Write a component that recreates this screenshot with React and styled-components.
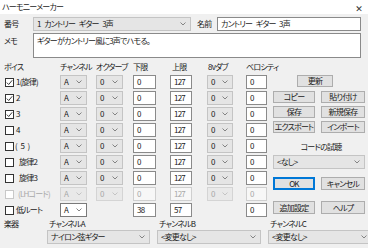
import React from 'react'
import styled, { createGlobalStyle, css } from 'styled-components'

const GlobalStyle = createGlobalStyle`
    html, body {
        margin: 0;
        padding: 0;
        background: #f0f0f0;
        overflow: hidden;
    }
    body {
        font-family: "Noto Sans CJK JP", "Noto Sans", sans-serif;
        font-size: 8px;
        font-feature-settings: "palt" 1;
        letter-spacing: -0.8px;
        word-spacing: 2.5px;
        color: #1a1a1a;
    }
`

const Window = styled.div`
    width: 368px;
    height: 248px;
    background: #f0f0f0;
    display: flex;
    flex-direction: column;
`

const TitleBar = styled.div`
    height: 14px;
    background: #fff;
    display: flex;
    align-items: center;
    justify-content: space-between;
    padding: 0 6px 0 2px;
    line-height: 1;
`

const CloseGlyph = styled.span`
    font-family: "DejaVu Sans", sans-serif;
    font-size: 9px;
    color: #333;
    margin-top: 4px;
`

const Body = styled.div`
    display: flex;
    flex-direction: column;
    padding: 3px 7px 0 4px;
`

const FieldRow = styled.div`
    display: flex;
    align-items: ${p => p.$top ? 'flex-start' : 'center'};
    margin-top: ${p => p.$mt || 0}px;
`

const FieldLabel = styled.span`
    width: ${p => p.$w}px;
    flex: none;
    line-height: ${p => p.$top ? '16px' : '1'};
    margin-left: ${p => p.$ml || 0}px;
`

const ComboBox = styled.div`
    box-sizing: border-box;
    width: ${p => p.$w}px;
    height: 14px;
    flex: none;
    display: flex;
    align-items: center;
    justify-content: space-between;
    padding: 0 4px 0 3px;
    line-height: 1;
    white-space: nowrap;
    overflow: hidden;
    ${p => p.$variant === 'white' && css`
        background: #fff;
        border: 1px solid #7a7a7a;
    `}
    ${p => p.$variant === 'gray' && css`
        background: #e5e5e5;
        border: 1px solid #c4c4c4;
    `}
    ${p => p.$variant === 'disabled' && css`
        background: #e9e9e9;
        border: 1px solid #d4d4d4;
        color: #a8a8a8;
    `}
`

const TextBox = styled.div`
    box-sizing: border-box;
    width: ${p => p.$w ? `${p.$w}px` : 'auto'};
    flex: ${p => p.$w ? 'none' : '1'};
    height: ${p => p.$h || 14}px;
    background: ${p => p.$disabled ? '#f7f7f7' : '#fff'};
    border: 1px solid ${p => p.$disabled ? '#cfcfcf' : '#8a8a8a'};
    color: ${p => p.$disabled ? '#a8a8a8' : '#1a1a1a'};
    padding: ${p => p.$h ? '3px 3px' : '0 3px'};
    display: flex;
    align-items: ${p => p.$h ? 'flex-start' : 'center'};
    line-height: 1;
    white-space: nowrap;
`

const Chevron = ({ color }) => (
    <svg width="6" height="4" viewBox="0 0 6 4">
        <polyline points="0.5,0.5 3,3 5.5,0.5" fill="none" stroke={color} strokeWidth="0.9" />
    </svg>
)

const Select = ({ value, w, variant = 'gray' }) => (
    <ComboBox $w={w} $variant={variant}>
        <span>{value}</span>
        <Chevron color={variant === 'disabled' ? '#c0c0c0' : '#777'} />
    </ComboBox>
)

const Main = styled.div`
    display: flex;
    margin-top: 3px;
`

const VoiceGrid = styled.div`
    display: grid;
    grid-template-columns: 56px 36px 37px 37px 37px 39px 21px;
    grid-template-rows: 12px repeat(9, 14px);
    row-gap: 2px;
    align-items: center;
`

const HeadCell = styled.span`
    line-height: 1;
    white-space: nowrap;
    padding-left: ${p => p.$pl || 0}px;
`

const VoiceLabel = styled.label`
    display: flex;
    align-items: center;
    gap: ${p => p.$gap}px;
    padding-left: 1px;
    line-height: 1;
    white-space: nowrap;
    color: ${p => p.$disabled ? '#a8a8a8' : '#1a1a1a'};
`

const CheckBox = styled.span`
    box-sizing: border-box;
    width: 9px;
    height: 9px;
    flex: none;
    border: 1px solid ${p => p.$disabled ? '#c8c8c8' : '#333'};
    background: #fff;
    display: flex;
    align-items: center;
    justify-content: center;
`

const Side = styled.div`
    width: 92px;
    margin-left: 6px;
    padding-top: 14px;
    display: flex;
    flex-direction: column;
`

const Btn = styled.div`
    box-sizing: border-box;
    width: ${p => p.$w}px;
    height: ${p => p.$h || 12}px;
    margin-left: ${p => p.$ml || 0}px;
    background: #e1e1e1;
    border: 1px solid ${p => p.$default ? '#0078d7' : '#adadad'};
    box-shadow: ${p => p.$default ? 'inset 0 0 0 1px #0078d7' : 'none'};
    display: flex;
    align-items: center;
    justify-content: center;
    line-height: 1;
    white-space: nowrap;
`

const BtnPair = styled.div`
    display: flex;
    gap: 6px;
    margin-top: ${p => p.$mt}px;
`

const SideLabel = styled.div`
    text-align: center;
    line-height: 10px;
    margin-top: 9px;
    padding-left: 4px;
`

const SideCombo = styled.div`
    margin-top: 3px;
`

const InstrumentGrid = styled.div`
    display: grid;
    grid-template-columns: 36px 103px 104px 104px;
    grid-template-rows: 10px 14px;
    column-gap: 7px;
    row-gap: 1px;
    margin-top: 2px;
    align-items: center;
    line-height: 1;
    white-space: nowrap;
`

const ChannelLabel = styled.span`
    padding-left: 2px;
`

const voices = [
    { label: '1(旋律)', checked: true, gap: 2 },
    { label: '2', checked: true, gap: 2 },
    { label: '3', checked: true, gap: 2 },
    { label: '4', gap: 2 },
    { label: '( 5 )', gap: 1 },
    { label: '旋律2', gap: 5 },
    { label: '旋律3', gap: 5 },
    { label: '(LHコード)', gap: 4, disabled: true },
    { label: '低ルート', gap: 2, lo: '38', hi: '57', root: true },
]

const CheckMark = () => (
    <svg width="7" height="7" viewBox="0 0 7 7">
        <polyline points="0.8,3.6 2.7,5.5 6.2,1.3" fill="none" stroke="#222" strokeWidth="0.9" />
    </svg>
)

const App = () => {
    return (
        <Window>
            <GlobalStyle />
            <TitleBar>
                <span>ハーモニーメーカー</span>
                <CloseGlyph>✕</CloseGlyph>
            </TitleBar>
            <Body>
                <FieldRow>
                    <FieldLabel $w={29}>番号</FieldLabel>
                    <Select value="1 カントリー ギター 3声" w={158} />
                    <FieldLabel $w={20} $ml={6}>名前</FieldLabel>
                    <TextBox>カントリー ギター 3声</TextBox>
                </FieldRow>
                <FieldRow $top $mt={2}>
                    <FieldLabel $w={29} $top>メモ</FieldLabel>
                    <TextBox $h={25}>ギターがカントリー風に3声でハモる。</TextBox>
                </FieldRow>
                <Main>
                    <VoiceGrid>
                        <HeadCell>ボイス</HeadCell>
                        <HeadCell>チャンネル</HeadCell>
                        <HeadCell>オクターブ</HeadCell>
                        <HeadCell>下限</HeadCell>
                        <HeadCell $pl={2}>上限</HeadCell>
                        <HeadCell $pl={1}>8vダブ</HeadCell>
                        <HeadCell>ベロシティ</HeadCell>
                        {voices.map(v => {
                            const state = v.disabled ? 'disabled' : 'gray'
                            return (
                                <React.Fragment key={v.label}>
                                    <VoiceLabel $gap={v.gap} $disabled={v.disabled}>
                                        <CheckBox $disabled={v.disabled}>{v.checked && <CheckMark />}</CheckBox>
                                        {v.label}
                                    </VoiceLabel>
                                    <Select value="A" w={27} variant={v.root ? 'white' : state} />
                                    {v.root ? <span /> : <Select value="0" w={27} variant={state} />}
                                    <TextBox $w={23} $disabled={v.disabled}>{v.lo || '0'}</TextBox>
                                    <TextBox $w={22} $disabled={v.disabled}>{v.hi || '127'}</TextBox>
                                    {v.root ? <span /> : <Select value="0" w={26} variant={state} />}
                                    <TextBox $w={21} $disabled={v.disabled}>0</TextBox>
                                </React.Fragment>
                            )
                        })}
                    </VoiceGrid>
                    <Side>
                        <Btn $w={36} $ml={24}>更新</Btn>
                        <BtnPair $mt={4}>
                            <Btn $w={42}>コピー</Btn>
                            <Btn $w={44}>貼り付け</Btn>
                        </BtnPair>
                        <BtnPair $mt={3}>
                            <Btn $w={42}>保存</Btn>
                            <Btn $w={44}>新規保存</Btn>
                        </BtnPair>
                        <BtnPair $mt={3}>
                            <Btn $w={42}>エクスポート</Btn>
                            <Btn $w={44}>インポート</Btn>
                        </BtnPair>
                        <SideLabel>コードの試聴</SideLabel>
                        <SideCombo>
                            <Select value="<なし>" w={92} />
                        </SideCombo>
                        <BtnPair $mt={8}>
                            <Btn $w={42} $h={13} $default>OK</Btn>
                            <Btn $w={44} $h={13}>キャンセル</Btn>
                        </BtnPair>
                        <BtnPair $mt={11}>
                            <Btn $w={42} $h={13}>追加設定</Btn>
                            <Btn $w={44} $h={13}>ヘルプ</Btn>
                        </BtnPair>
                    </Side>
                </Main>
                <InstrumentGrid>
                    <span>楽器</span>
                    <ChannelLabel>チャンネルA</ChannelLabel>
                    <ChannelLabel>チャンネルB</ChannelLabel>
                    <ChannelLabel>チャンネルC</ChannelLabel>
                    <span />
                    <Select value="ナイロン弦ギター" w={103} />
                    <Select value="<変更なし>" w={104} />
                    <Select value="<変更なし>" w={104} />
                </InstrumentGrid>
            </Body>
        </Window>
    )
}

export default App
